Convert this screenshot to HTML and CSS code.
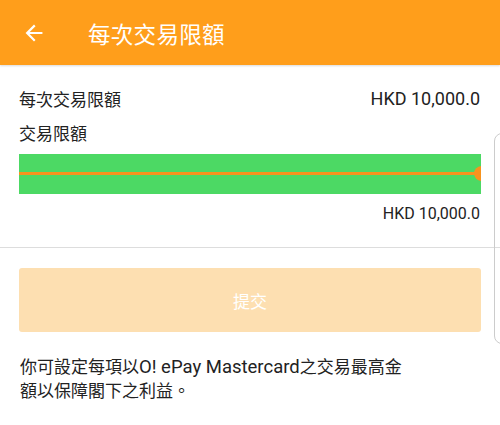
FILE: index.html
```html
<!DOCTYPE html>
<html lang="zh-Hant">
<head>
    <meta charset="UTF-8">
    <meta name="viewport" content="width=device-width, initial-scale=1.0">
    <title>每次交易限額</title>
    <link rel="stylesheet" href="styles.css">
</head>
<body>
    <div class="app-bar">
        <svg class="back" width="22" height="22" viewBox="0 0 24 24">
            <path d="M20 12H5M12 4.5L4.5 12 12 19.5" fill="none" stroke="#fff" stroke-width="2.4" stroke-linecap="square"/>
        </svg>
        <div class="title">每次交易限額</div>
    </div>
    <div class="content">
        <div class="row">
            <span>每次交易限額</span>
            <span class="amount">HKD 10,000.0</span>
        </div>
        <div class="label">交易限額</div>
        <div class="slider">
            <div class="track"></div>
            <div class="thumb"></div>
        </div>
        <div class="slider-value">HKD 10,000.0</div>
    </div>
    <div class="divider"></div>
    <div class="actions">
        <button type="button" class="submit" disabled>提交</button>
        <p class="note">你可設定每項以<span class="latin">O! ePay Mastercard</span>之交易最高金額以保障閣下之利益。</p>
    </div>
    <div class="edge"></div>
</body>
</html>
```

FILE: styles.css
```css
body { margin: 0; background: #fff; color: #222; font-family: Roboto, "Noto Sans CJK TC", sans-serif; overflow: hidden; position: relative; height: 425px; }
.app-bar { height: 65px; background: #ff9e1b; display: flex; align-items: center; padding-left: 23px; box-shadow: 0 1px 2px rgba(0, 0, 0, 0.15); }
.back { display: block; }
.title { color: #fff; font-size: 22.5px; margin-left: 43px; letter-spacing: 0.3px; }
.content { padding: 21px 19px 0 19px; }
.row { display: flex; justify-content: space-between; align-items: center; font-size: 17px; height: 24px; }
.amount { font-size: 18px; margin-right: 1px; }
.label { font-size: 17px; margin-top: 10px; height: 24px; }
.slider { position: relative; height: 40px; margin-top: 10px; background: #4cd964; overflow: hidden; }
.track { position: absolute; left: 0; right: 0; top: 18px; height: 3px; background: #f7931e; }
.thumb { position: absolute; right: -8px; top: 12px; width: 15px; height: 15px; border-radius: 50%; background: #f7931e; }
.slider-value { text-align: right; font-size: 16px; margin-top: 10px; margin-right: 1px; }
.divider { height: 1px; background: #ddd; margin-top: 24px; }
.actions { padding: 20px 19px 0 19px; }
.submit { width: 100%; height: 64px; border: none; border-radius: 3px; background: #fddfb1; color: #fff; font-size: 17px; font-family: inherit; }
.note { margin: 23px 0 0 1px; max-width: 392px; font-size: 17px; line-height: 24px; }
.latin { font-size: 18.5px; line-height: 20px; }
.edge { position: absolute; right: -20px; top: 133px; width: 24px; height: 209px; border: 1px solid #ccc; border-radius: 8px; }
```
